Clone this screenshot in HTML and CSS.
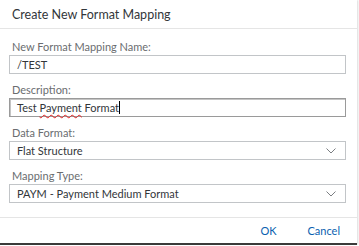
FILE: index.html
```html
<!DOCTYPE html>
<html lang="en">
<head>
    <meta charset="UTF-8">
    <title>Create New Format Mapping</title>
    <link rel="stylesheet" href="styles.css">
</head>
<body>

<div class="dialog">
    <!-- Header -->
    <header class="dialog-header">
        <h1>Create New Format Mapping</h1>
    </header>

    <!-- Form -->
    <main class="dialog-body">
        <div class="field">
            <label>New Format Mapping Name:</label>
            <div class="input"><span>/TEST</span></div>
        </div>
        <div class="field">
            <label>Description:</label>
            <div class="input focused"><span>Test <span class="typo">Payment</span> Forma<span class="caret">t</span></span></div>
        </div>
        <div class="field">
            <label>Data Format:</label>
            <div class="input select">
                <span>Flat Structure</span>
                <svg class="chevron" width="10" height="6" viewBox="0 0 10 6"><path d="M0.5 0.5 L5 5 L9.5 0.5" fill="none" stroke="#7b7e82" stroke-width="1"/></svg>
            </div>
        </div>
        <div class="field">
            <label>Mapping Type:</label>
            <div class="input select">
                <span>PAYM - Payment Medium Format</span>
                <svg class="chevron" width="10" height="6" viewBox="0 0 10 6"><path d="M0.5 0.5 L5 5 L9.5 0.5" fill="none" stroke="#7b7e82" stroke-width="1"/></svg>
            </div>
        </div>
    </main>

    <!-- Footer -->
    <footer class="dialog-footer">
        <button class="btn">OK</button>
        <button class="btn">Cancel</button>
    </footer>
</div>

</body>
</html>
```

FILE: styles.css
```css
/* General */
body {
    margin: 0;
    padding: 0;
    background-color: #fff;
    font-family: 'Lato', 'Open Sans', sans-serif;
    color: #32363a;
}

.dialog {
    width: 357px;
    height: 243px;
    display: flex;
    flex-direction: column;
    background-color: #fff;
    border-bottom: 2px solid #3a3a3a;
    box-shadow: 1px 0 2px rgba(0,0,0,0.15);
}

/* Header */
.dialog-header {
    height: 28px;
    border-bottom: 1px solid #e5e5e5;
    padding-left: 12px;
    display: flex;
    align-items: center;
}

.dialog-header h1 {
    margin: 0;
    font-size: 12.5px;
    font-weight: normal;
    color: #32363a;
}

/* Body */
.dialog-body {
    flex: 1;
    padding: 10px 11px 0 9px;
    display: flex;
    flex-direction: column;
    gap: 8px;
}

.field label {
    display: block;
    padding-left: 3px;
    font-size: 11px;
    line-height: 16px;
    color: #6a6d70;
}

.input {
    height: 17px;
    border: 1px solid #c2c5c8;
    padding: 0 7px;
    font-size: 11px;
    line-height: 17px;
    color: #32363a;
    display: flex;
    align-items: center;
}

.input.focused {
    border: 1px solid #9a9a9a;
    box-shadow: inset 1px 1px 0 #c4c4c4;
}

.typo {
    text-decoration: underline wavy #e02020;
    text-decoration-thickness: 1px;
    text-underline-offset: 2px;
}

.caret {
    border-right: 1px solid #000;
}

.select {
    justify-content: space-between;
}

.chevron {
    margin-right: 2px;
}

/* Footer */
.dialog-footer {
    height: 25px;
    border-top: 1px solid #e5e5e5;
    display: flex;
    justify-content: flex-end;
    align-items: center;
    gap: 27px;
    padding-right: 15px;
}

.btn {
    background: none;
    border: none;
    padding: 0 2px;
    font-family: inherit;
    font-size: 11px;
    color: #0a5fb0;
    cursor: pointer;
}
```
